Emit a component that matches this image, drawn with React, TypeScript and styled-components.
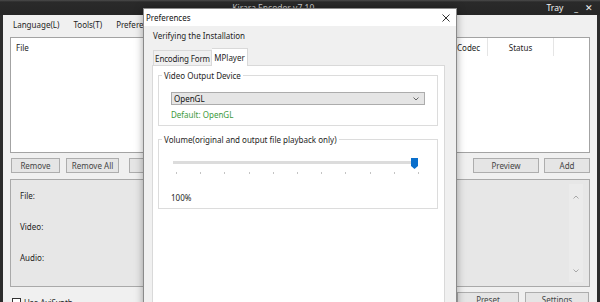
import styled, { createGlobalStyle } from 'styled-components';

const GlobalStyle = createGlobalStyle`
  html, body {
    margin: 0;
    padding: 0;
  }
  body {
    width: 600px;
    height: 302px;
    overflow: hidden;
    font-family: 'Noto Sans', 'Open Sans', sans-serif;
    font-size: 8px;
    color: #1e1e1e;
  }
`;

const Desktop = styled.div`
  position: relative;
  width: 600px;
  height: 302px;
  overflow: hidden;
  background: #2c2c2c;
`;

const MainWindow = styled.div`
  display: flex;
  flex-direction: column;
  height: 100%;
`;

const TitleBar = styled.div`
  height: 15px;
  flex-shrink: 0;
  display: flex;
  align-items: center;
  background: linear-gradient(#4c4c4c 0, #2a2a2a 2px, #262626 100%);
  color: #d0d0d0;
  font-size: 8.5px;
`;

const Spacer = styled.div`
  flex: 1;
`;

const WindowControls = styled.div`
  display: flex;
  align-items: center;
  padding-right: 7px;
  color: #f2f2f2;
`;

const Control = styled.span<{ $gap: number }>`
  margin-right: ${(p) => p.$gap}px;
`;

const WindowBody = styled.div`
  flex: 1;
  display: flex;
  flex-direction: column;
  margin: 0 3px;
  background: #f0f0f0;
`;

const MenuBar = styled.div`
  height: 19px;
  display: flex;
  align-items: center;
  padding-left: 3px;
`;

const MenuItem = styled.span`
  padding: 0 7px;
  white-space: nowrap;
`;

const FileList = styled.div`
  height: 114px;
  margin: 3px 7px 0;
  background: #fff;
  border: 1px solid #a3a3a3;
`;

const ListHeader = styled.div`
  display: flex;
  height: 18px;
`;

const HeaderCell = styled.div<{ $width?: number; $center?: boolean }>`
  ${(p) => (p.$width ? `width: ${p.$width}px;` : 'flex: 1;')}
  box-sizing: border-box;
  display: flex;
  align-items: center;
  justify-content: ${(p) => (p.$center ? 'center' : 'flex-start')};
  padding-left: ${(p) => (p.$center ? 0 : 5)}px;
  border-left: ${(p) => (p.$width ? '1px solid #e5e5e5' : 'none')};
`;

const ButtonRow = styled.div`
  display: flex;
  justify-content: space-between;
  margin: 5px 7px 0 8px;
`;

const ButtonGroup = styled.div<{ $gap: number }>`
  display: flex;
  gap: ${(p) => p.$gap}px;
`;

const Button = styled.button<{ $width: number }>`
  width: ${(p) => p.$width}px;
  height: 15px;
  padding: 0;
  background: #e5e5e5;
  border: 1px solid #adadad;
  font-family: inherit;
  font-size: 8px;
  color: #444;
  flex-shrink: 0;
`;

const InfoPanel = styled.div`
  height: 106px;
  margin: 6px 7px 0;
  display: flex;
  background: #e7e7e7;
  border: 1px solid #a9a9a9;
`;

const InfoLabels = styled.div`
  flex: 1;
  display: flex;
  flex-direction: column;
  gap: 19px;
  padding: 10px 0 0 9px;
`;

const InfoLabel = styled.div`
  height: 12px;
  line-height: 12px;
`;

const ScrollBar = styled.div`
  width: 14px;
  margin: 4px 6px 4px 0;
  display: flex;
  flex-direction: column;
  align-items: center;
  justify-content: space-between;
  padding: 11px 0 9px;
  background: #ebebeb;
`;

const BottomRow = styled.div`
  display: flex;
  justify-content: space-between;
  align-items: flex-start;
  margin: 5px 8px 0 9px;
`;

const CheckLabel = styled.label`
  display: flex;
  align-items: center;
  gap: 3px;
  margin-top: 5px;
`;

const CheckBox = styled.span`
  width: 7px;
  height: 7px;
  border: 1px solid #333;
  background: #fff;
`;

/* dialog */

const Dialog = styled.div`
  position: absolute;
  left: 143px;
  top: 8px;
  width: 314px;
  height: 320px;
  box-sizing: border-box;
  display: flex;
  flex-direction: column;
  border: 1px solid #8a8a8a;
  background: #f0f0f0;
  box-shadow: 0 0 8px rgba(0, 0, 0, 0.35);
`;

const DialogTitle = styled.div`
  height: 17px;
  display: flex;
  align-items: center;
  justify-content: space-between;
  padding: 0 6px 0 2px;
  background: #fff;
  color: #111;
`;

const DialogBody = styled.div`
  flex: 1;
  display: flex;
  flex-direction: column;
  padding: 0 11px 0 8px;
`;

const Subtitle = styled.div`
  height: 18px;
  display: flex;
  align-items: center;
  padding-left: 1px;
`;

const TabStrip = styled.div`
  height: 21px;
  display: flex;
  align-items: flex-end;
  padding-left: 1px;
`;

const Tab = styled.div<{ $active?: boolean; $width: number }>`
  width: ${(p) => p.$width}px;
  height: ${(p) => (p.$active ? 18 : 15)}px;
  box-sizing: border-box;
  display: flex;
  align-items: center;
  justify-content: center;
  white-space: nowrap;
  letter-spacing: ${(p) => (p.$active ? 0 : -0.15)}px;
  border: 1px solid #d9d9d9;
  border-bottom: none;
  border-left: ${(p) => (p.$active ? 'none' : '1px solid #d9d9d9')};
  background: ${(p) => (p.$active ? '#fff' : '#f0f0f0')};
  margin-bottom: ${(p) => (p.$active ? -1 : 0)}px;
  position: relative;
  z-index: ${(p) => (p.$active ? 1 : 0)};
`;

const TabPanel = styled.div`
  flex: 1;
  display: flex;
  flex-direction: column;
  gap: 8px;
  padding: 4px 6px 0 5px;
  background: #fff;
  border: 1px solid #d9d9d9;
`;

const Group = styled.fieldset<{ $bottom: number }>`
  margin: 0;
  padding: 0 12px ${(p) => p.$bottom}px;
  border: 1px solid #dcdcdc;
  min-width: 0;
`;

const Legend = styled.legend`
  margin-left: -9px;
  padding: 0 2px;
  line-height: 11px;
`;

const Combo = styled.div`
  margin-top: 11px;
  height: 13px;
  box-sizing: border-box;
  display: flex;
  align-items: center;
  justify-content: space-between;
  padding: 0 5px 0 2px;
  background: #e5e5e5;
  border: 1px solid #acacac;
  color: #111;
`;

const Hint = styled.div`
  margin-top: 4px;
  line-height: 11px;
  color: #3c9a3c;
`;

const Slider = styled.div`
  position: relative;
  margin: 12px 5px 0 2px;
  height: 13px;
`;

const Track = styled.div`
  position: absolute;
  left: 0;
  right: 3px;
  top: 4px;
  height: 3px;
  background: #dcdcdc;
`;

const Thumb = styled.svg`
  position: absolute;
  top: 1px;
`;

const Ticks = styled.div`
  display: flex;
  justify-content: space-between;
  margin: 2px 6px 0 5px;
`;

const Tick = styled.span`
  width: 1px;
  height: 2px;
  background: #c4c4c4;
`;

const Percent = styled.div`
  margin-top: 18px;
  line-height: 11px;
`;

const Chevron = ({ up, color = '#a8a8a8' }: { up?: boolean; color?: string }) => (
  <svg width="6" height="4" viewBox="0 0 6 4">
    <path
      d={up ? 'M0.5 3.5 L3 1 L5.5 3.5' : 'M0.5 0.5 L3 3 L5.5 0.5'}
      fill="none"
      stroke={color}
      strokeWidth="1"
    />
  </svg>
);

const CloseIcon = () => (
  <svg width="8" height="8" viewBox="0 0 8 8">
    <path d="M0.5 0.5 L7.5 7.5 M7.5 0.5 L0.5 7.5" stroke="#333" strokeWidth="1" />
  </svg>
);

const volume = 100;
const sliderWidth = 245;

const App = () => {
  return (
    <>
      <GlobalStyle />
      <Desktop>
        <MainWindow>
          <TitleBar>
            <Spacer />
            <span>Kirara Encoder v7.10</span>
            <Spacer />
            <WindowControls>
              <Control $gap={11}>Tray</Control>
              <Control $gap={7}>_</Control>
              <Control $gap={0}>✕</Control>
            </WindowControls>
          </TitleBar>
          <WindowBody>
            <MenuBar>
              <MenuItem>Language(L)</MenuItem>
              <MenuItem>Tools(T)</MenuItem>
              <MenuItem>Preferences(P)</MenuItem>
            </MenuBar>
            <FileList>
              <ListHeader>
                <HeaderCell>File</HeaderCell>
                <HeaderCell $width={36}>Codec</HeaderCell>
                <HeaderCell $width={66} $center>
                  Status
                </HeaderCell>
                <HeaderCell $width={36} />
              </ListHeader>
            </FileList>
            <ButtonRow>
              <ButtonGroup $gap={6}>
                <Button $width={49}>Remove</Button>
                <Button $width={53}>Remove All</Button>
                <Button $width={40} style={{ marginLeft: 4 }}>
                  ↑↑
                </Button>
              </ButtonGroup>
              <ButtonGroup $gap={5}>
                <Button $width={66}>Preview</Button>
                <Button $width={46}>Add</Button>
              </ButtonGroup>
            </ButtonRow>
            <InfoPanel>
              <InfoLabels>
                <InfoLabel>File:</InfoLabel>
                <InfoLabel>Video:</InfoLabel>
                <InfoLabel>Audio:</InfoLabel>
              </InfoLabels>
              <ScrollBar>
                <Chevron up />
                <Chevron />
              </ScrollBar>
            </InfoPanel>
            <BottomRow>
              <CheckLabel>
                <CheckBox />
                Use AviSynth
              </CheckLabel>
              <ButtonGroup $gap={6}>
                <Button $width={62}>Preset</Button>
                <Button $width={64}>Settings</Button>
              </ButtonGroup>
            </BottomRow>
          </WindowBody>
        </MainWindow>

        <Dialog>
          <DialogTitle>
            <span>Preferences</span>
            <CloseIcon />
          </DialogTitle>
          <DialogBody>
            <Subtitle>Verifying the Installation</Subtitle>
            <TabStrip>
              <Tab $width={59}>Encoding Form</Tab>
              <Tab $width={36} $active>
                MPlayer
              </Tab>
            </TabStrip>
            <TabPanel>
              <Group $bottom={5}>
                <Legend>Video Output Device</Legend>
                <Combo>
                  <span>OpenGL</span>
                  <Chevron color="#666" />
                </Combo>
                <Hint>Default: OpenGL</Hint>
              </Group>
              <Group $bottom={5}>
                <Legend>Volume(original and output file playback only)</Legend>
                <Slider>
                  <Track />
                  <Thumb
                    width="7"
                    height="11"
                    viewBox="0 0 7 11"
                    style={{ left: ((sliderWidth - 7) * volume) / 100 }}
                  >
                    <path d="M0 0 H7 V8 L3.5 11 L0 8 Z" fill="#0a6fcc" />
                  </Thumb>
                </Slider>
                <Ticks>
                  {Array.from({ length: 11 }, (_, i) => (
                    <Tick key={i} />
                  ))}
                </Ticks>
                <Percent>{volume}%</Percent>
              </Group>
            </TabPanel>
          </DialogBody>
        </Dialog>
      </Desktop>
    </>
  );
};

export default App;
